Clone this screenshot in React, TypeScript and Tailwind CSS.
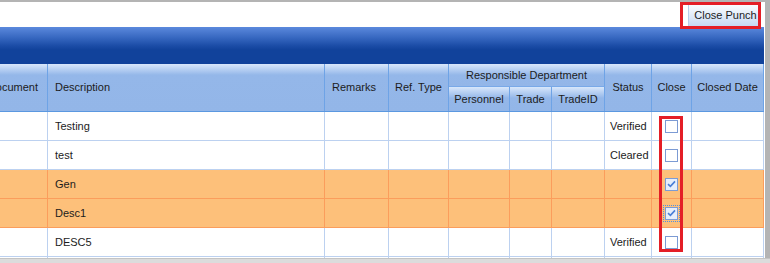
import { ReactNode } from 'react'

type Row = { desc: string; status: string; closed: boolean; picked?: boolean; focus?: boolean }

const rows: Row[] = [
  { desc: 'Testing', status: 'Verified', closed: false },
  { desc: 'test', status: 'Cleared', closed: false },
  { desc: 'Gen', status: '', closed: true, picked: true },
  { desc: 'Desc1', status: '', closed: true, picked: true, focus: true },
  { desc: 'DESC5', status: 'Verified', closed: false },
]

const cols = 'grid grid-cols-[48px_277px_64px_60px_61px_42px_53px_47px_40px_72px]'
const head =
  'flex items-center justify-center border-r border-[#6ea3e6] bg-[linear-gradient(to_bottom,#d8e7fb_0px,#94b7e9_11px,#93b6e8_100%)] text-[#1c1c1c] whitespace-nowrap overflow-hidden'

function Check({ on, focus }: { on: boolean; focus?: boolean }) {
  return (
    <div className={focus ? 'p-[2px] outline-1 outline-dotted outline-[#4f8fe6] -outline-offset-1' : ''}>
      <div
        className={`w-[13px] h-[13px] border border-[#7c9bd4] flex items-center justify-center ${
          on ? 'bg-[#e6eefb]' : 'bg-white'
        }`}
      >
        {on && (
          <svg width="9" height="8" viewBox="0 0 9 8">
            <path d="M1 4.2 L3.4 6.4 L8 1.4" fill="none" stroke="#4b7fd6" strokeWidth="1.6" />
          </svg>
        )}
      </div>
    </div>
  )
}

function Cell({ children, className = '', orange }: { children?: ReactNode; className?: string; orange?: boolean }) {
  return (
    <div
      className={`h-[29px] flex items-center border-r border-b whitespace-nowrap overflow-hidden ${
        orange ? 'border-[#fb9d5c]' : 'border-[#bcd1f0]'
      } ${className}`}
    >
      {children}
    </div>
  )
}

export default function App() {
  return (
    <div className="w-[770px] h-[263px] overflow-hidden bg-white relative text-[11px] text-[#1c1c1c] font-['Liberation_Sans',Arial,sans-serif]">
      <div className="h-[2px] bg-[#b4b4b4]" />
      <div className="flex">
        <div className="w-[765px]">
          <div className="h-[25px] flex justify-end items-start pr-[6px]">
            <button className="mt-[1px] h-[23px] w-[71px] border-l border-[#b9cde9] bg-[linear-gradient(to_bottom,#ffffff,#e4edf9_50%,#c6d8f3)] text-[11px] text-[#1c1c1c] leading-none pt-[2px] pl-[3px]">
              Close Punch
            </button>
          </div>
          <div className="w-[764px]">
            <div className="h-[37px] bg-[linear-gradient(to_bottom,#5b89dd_0%,#3566bf_30%,#1a4ba5_52%,#11429b_62%,#11429b_100%)]" />
            <div className={`${cols} grid-rows-[23px_24px] border-b border-[#5b98e0]`}>
              <div className={`${head} row-span-2 justify-end pr-[9px]`}>Document</div>
              <div className={`${head} row-span-2 justify-start pl-[7px]`}>Description</div>
              <div className={`${head} row-span-2 justify-start pl-[7px]`}>Remarks</div>
              <div className={`${head} row-span-2`}>Ref. Type</div>
              <div className={`${head} col-span-3 border-b border-b-[#79a9e8]`}>Responsible Department</div>
              <div className={`${head} row-span-2`}>Status</div>
              <div className={`${head} row-span-2`}>Close</div>
              <div className={`${head} row-span-2`}>Closed Date</div>
              <div className={`${head} pt-[1px]`}>Personnel</div>
              <div className={`${head} pt-[1px]`}>Trade</div>
              <div className={`${head} pt-[1px]`}>TradeID</div>
            </div>
            {rows.map((r, i) => (
              <div key={i} className={`${cols} ${r.picked ? 'bg-[#fdc07a]' : 'bg-white'}`}>
                <Cell orange={r.picked} />
                <Cell orange={r.picked} className="pl-[7px]">{r.desc}</Cell>
                <Cell orange={r.picked} />
                <Cell orange={r.picked} />
                <Cell orange={r.picked} />
                <Cell orange={r.picked} />
                <Cell orange={r.picked} />
                <Cell orange={r.picked} className="pl-[5px]">{r.status}</Cell>
                <Cell orange={r.picked} className="justify-center">
                  <Check on={r.closed} focus={r.focus} />
                </Cell>
                <Cell orange={r.picked} />
              </div>
            ))}
            <div className={`${cols} h-[2px]`}>
              {Array.from({ length: 10 }).map((_, i) => (
                <div key={i} className="border-r border-[#bcd1f0]" />
              ))}
            </div>
          </div>
        </div>
        <div className="w-[5px] bg-[#b4b4b4] h-[263px]" />
      </div>
      <div className="absolute left-0 right-0 bottom-0 h-[5px] bg-[#dcdcdc] border-t border-[#c4c4c4]" />

      <div className="absolute left-[680px] top-[2px] w-[81px] h-[27px] border-[3px] border-[#e41e26]" />
      <div className="absolute left-[659px] top-[116px] w-[24px] h-[136px] border-[3px] border-[#e41e26]" />
    </div>
  )
}
